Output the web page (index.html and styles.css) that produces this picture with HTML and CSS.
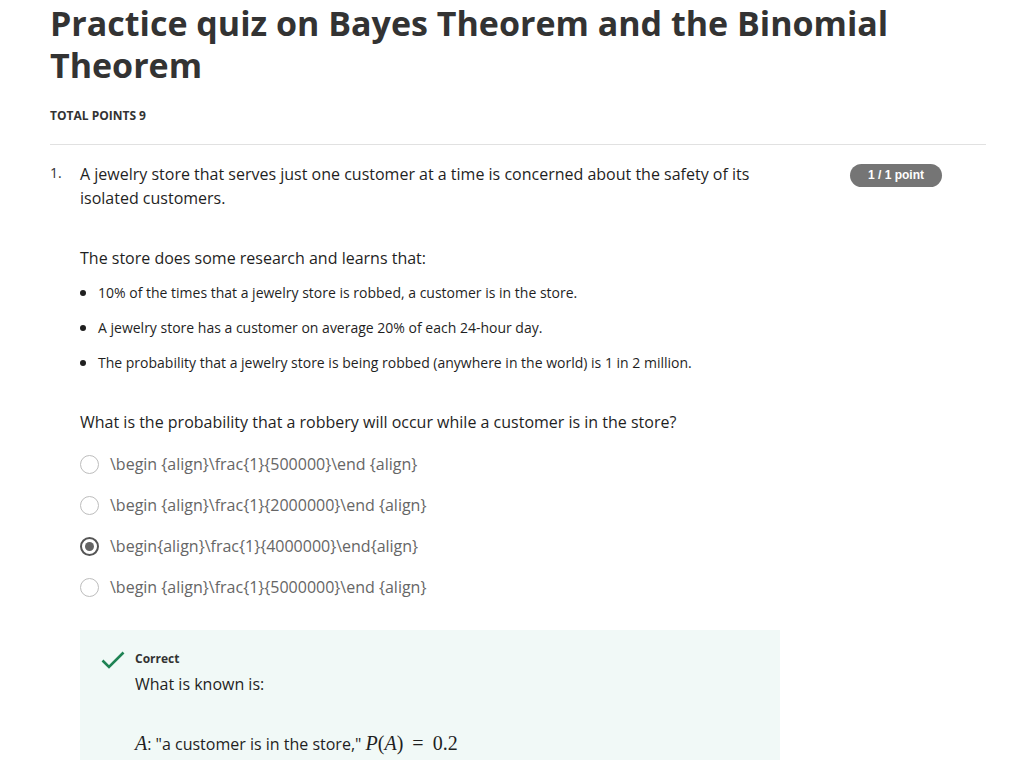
FILE: index.html
```html
<!DOCTYPE html>
<html lang="en">
<head>
<meta charset="utf-8">
<title>Practice quiz on Bayes Theorem and the Binomial Theorem</title>
<link rel="stylesheet" href="styles.css">
</head>
<body>
<main class="page">
  <header class="head">
    <h1 class="title">Practice quiz on Bayes Theorem and the Binomial Theorem</h1>
    <div class="total">TOTAL POINTS 9</div>
  </header>
  <section class="question">
    <div class="qnum">1.</div>
    <div class="qbody">
      <p class="qtext">A jewelry store that serves just one customer at a time is concerned about the safety of its isolated customers.</p>
      <p class="qtext gap">The store does some research and learns that:</p>
      <ul class="facts">
        <li>10% of the times that a jewelry store is robbed, a customer is in the store.</li>
        <li>A jewelry store has a customer on average 20% of each 24-hour day.</li>
        <li>The probability that a jewelry store is being robbed (anywhere in the world) is 1 in 2 million.</li>
      </ul>
      <p class="qtext ask">What is the probability that a robbery will occur while a customer is in the store?</p>
      <div class="options">
        <div class="opt"><span class="radio"></span><span class="otext">\begin {align}\frac{1}{500000}\end {align}</span></div>
        <div class="opt"><span class="radio"></span><span class="otext">\begin {align}\frac{1}{2000000}\end {align}</span></div>
        <div class="opt"><span class="radio on"></span><span class="otext">\begin{align}\frac{1}{4000000}\end{align}</span></div>
        <div class="opt"><span class="radio"></span><span class="otext">\begin {align}\frac{1}{5000000}\end {align}</span></div>
      </div>
      <div class="feedback">
        <svg class="check" width="24" height="18" viewBox="0 0 24 18"><path d="M1.5 9.5 L8 16 L22.5 1.5" fill="none" stroke="#1f8354" stroke-width="2.6"/></svg>
        <div class="fbody">
          <div class="flabel">Correct</div>
          <p class="ftext">What is known is:</p>
          <p class="ftext math-line"><span class="mi">A</span>: "a customer is in the store," <span class="mi">P</span><span class="mr">(</span><span class="mi">A</span><span class="mr">)</span><span class="mr eq">=</span><span class="mr">0.2</span></p>
        </div>
      </div>
    </div>
    <div class="badge">1 / 1 point</div>
  </section>
</main>
</body>
</html>
```

FILE: styles.css
```css
html, body {
  margin: 0;
  padding: 0;
  background: #fff;
}
body {
  font-family: "Open Sans", "DejaVu Sans", sans-serif;
  color: #1f1f1f;
}
.page {
  padding: 2px 40px 0 50px;
}
.head {
  border-bottom: 1px solid #e1e1e1;
  padding-bottom: 20px;
}
.title {
  margin: 0;
  font-size: 34px;
  line-height: 42px;
  font-weight: 700;
  color: #333;
  width: 900px;
}
.total {
  margin-top: 22px;
  font-size: 12px;
  font-weight: 700;
  line-height: 16px;
  color: #333;
}
.question {
  display: grid;
  grid-template-columns: 30px 700px 1fr;
  padding-top: 17px;
}
.qnum {
  font-size: 14px;
  line-height: 22px;
  color: #333;
}
.qtext {
  margin: 0;
  font-size: 16px;
  line-height: 24px;
  color: #1f1f1f;
}
.qtext.gap {
  margin-top: 36px;
}
.facts {
  margin: 12px 0 0;
  padding: 0 0 0 18px;
  font-size: 14px;
  line-height: 20px;
  color: #1f1f1f;
}
.facts li {
  margin-bottom: 14px;
}
.facts li::marker {
  font-size: 16px;
}
.qtext.ask {
  margin-top: 37px;
}
.options {
  margin-top: 18px;
  display: flex;
  flex-direction: column;
  gap: 17px;
}
.opt {
  display: flex;
  align-items: center;
  gap: 11px;
  height: 24px;
}
.radio {
  box-sizing: border-box;
  width: 19px;
  height: 19px;
  border-radius: 50%;
  border: 1.5px solid #bdbdbd;
  background: #fff;
  display: flex;
  align-items: center;
  justify-content: center;
  flex: none;
}
.radio.on {
  border: 2px solid #555;
}
.radio.on::after {
  content: "";
  width: 9px;
  height: 9px;
  border-radius: 50%;
  background: #636363;
}
.otext {
  font-size: 16px;
  line-height: 24px;
  color: #666;
}
.feedback {
  margin-top: 31px;
  background: #f1f9f7;
  display: flex;
  gap: 10px;
  padding: 20px 20px 20px 21px;
  min-height: 150px;
}
.check {
  flex: none;
  margin-top: 1px;
}
.flabel {
  font-size: 12px;
  font-weight: 700;
  line-height: 18px;
  color: #333;
  margin-bottom: 4px;
}
.ftext {
  margin: 0;
  font-size: 16px;
  line-height: 24px;
  color: #1f1f1f;
}
.ftext.math-line {
  margin-top: 35px;
}
.mi {
  font-family: "Liberation Serif", "DejaVu Serif", serif;
  font-style: italic;
  font-size: 20px;
}
.mr {
  font-family: "Liberation Serif", "DejaVu Serif", serif;
  font-size: 20px;
}
.mr.eq {
  margin: 0 9px;
}
.badge {
  justify-self: end;
  align-self: start;
  margin-top: 2px;
  margin-right: 44px;
  width: 92px;
  height: 23px;
  border-radius: 12px;
  background: #757575;
  color: #fff;
  font-family: "Liberation Sans", Arial, sans-serif;
  font-size: 12px;
  font-weight: 700;
  line-height: 23px;
  text-align: center;
}
```
